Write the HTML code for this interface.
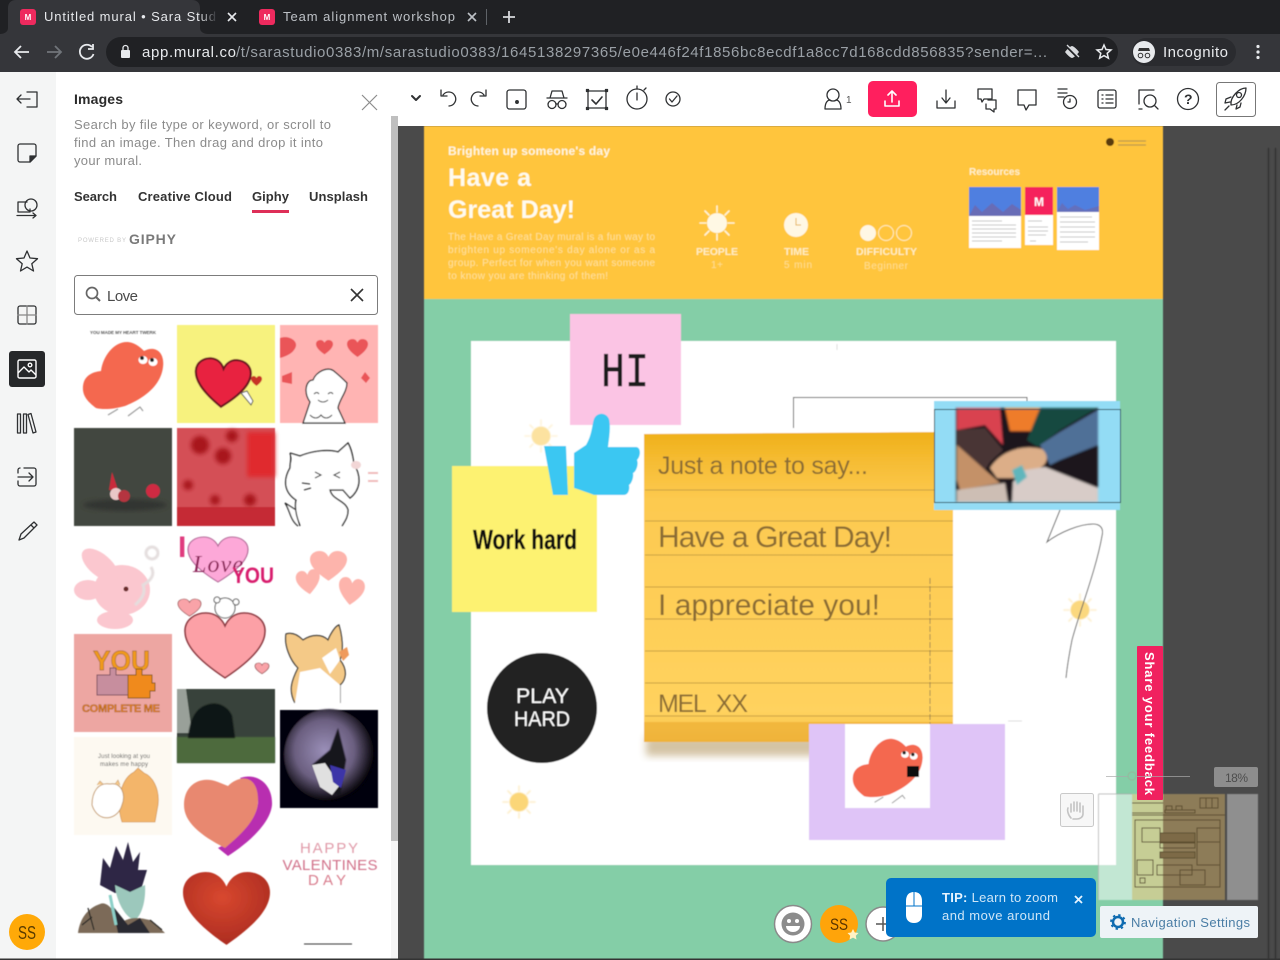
<!DOCTYPE html>
<html><head><meta charset="utf-8"><title>Untitled mural</title>
<style>
html,body{margin:0;padding:0;background:#4a4a4a;width:1280px;height:960px;overflow:hidden}
svg.root{display:block;position:absolute;left:0;top:0;filter:blur(.35px)}
text{font-family:"Liberation Sans","DejaVu Sans",sans-serif}
.b{font-weight:bold}
.ic{fill:none;stroke:#2f3133;stroke-width:1.3;stroke-linecap:round;stroke-linejoin:round}
.hand{font-family:"Liberation Sans",sans-serif;fill:#8a6c36}
.ln{stroke:#c9a043;stroke-width:1}
</style></head><body>
<svg class="root" width="1280" height="960" viewBox="0 0 1280 960" xmlns="http://www.w3.org/2000/svg">
<defs>
<path id="h" d="M50 90C12 62 0 42 0 25C0 9 13 0 26 0C38 0 46 8 50 18C54 8 62 0 74 0C87 0 100 9 100 25C100 42 88 62 50 90Z"/>
<filter id="bl" x="-5%" y="-5%" width="110%" height="110%"><feGaussianBlur stdDeviation="0.5"/></filter>
<filter id="bl2" x="-10%" y="-10%" width="120%" height="120%"><feGaussianBlur stdDeviation="1.1"/></filter>
<filter id="bl4" x="-20%" y="-20%" width="140%" height="140%"><feGaussianBlur stdDeviation="2.2"/></filter>
<filter id="bl3" x="-10%" y="-30%" width="120%" height="160%"><feGaussianBlur stdDeviation="4"/></filter>
<linearGradient id="ng" x1="0" y1="0" x2="0" y2="1">
<stop offset="0" stop-color="#efb019"/><stop offset=".1" stop-color="#f6bd35"/><stop offset=".22" stop-color="#fdca50"/><stop offset=".9" stop-color="#ffd25e"/><stop offset="1" stop-color="#f7c14a"/></linearGradient>
<linearGradient id="fade" x1="0" y1="0" x2="1" y2="0"><stop offset="0" stop-color="#e8eaed"/><stop offset=".9" stop-color="#e8eaed"/><stop offset="1" stop-color="#35363a"/></linearGradient>
<radialGradient id="rh" cx=".45" cy=".35" r=".7"><stop offset="0" stop-color="#d8482f"/><stop offset="1" stop-color="#a92a20"/></radialGradient>
<radialGradient id="dk" cx=".45" cy=".45" r=".55"><stop offset="0" stop-color="#9a8fb8"/><stop offset=".6" stop-color="#6b5f80"/><stop offset="1" stop-color="#050308"/></radialGradient>
<g id="sun"><g stroke="#fdeec8" stroke-width="1.600" stroke-linecap="round"><path d="M0-16V-11M0 11V16M-16 0H-11M11 0H16M-11-11L-8-8M8 8L11 11M11-11L8-8M-8 8L-11 11"/></g><circle r="9.500" fill="#fbd678"/></g>
<g id="bigheart">
<path d="M96 408C88 402 82 396 83 386C84 376 92 372 101 371C103 355 115 341 128 342C136 343 141 348 144 351C155 345 165 352 163 367C161 385 145 398 125 406C115 409 103 410 96 408Z" fill="#f4684f"/>
<ellipse cx="143" cy="360" rx="4.500" ry="4" fill="#fff"/><ellipse cx="153" cy="362" rx="4.500" ry="4" fill="#fff"/><circle cx="142" cy="358" r="2" fill="#222"/><circle cx="152" cy="360" r="2" fill="#222"/>
<path d="M108 415L118 409M128 416L140 407L143 411" stroke="#999" fill="none" stroke-width="1.100"/>
</g>
</defs>

<rect width="1280" height="960" fill="#4a4a4a"/>

<!-- canvas -->
<g filter="url(#bl)">
<rect x="424" y="126" width="739" height="173" fill="#ffc53c"/>
<rect x="424" y="299" width="739" height="661" fill="#84cea7"/>
<rect x="471" y="341" width="645" height="524" fill="#fff"/>
<path d="M837 344v6" stroke="#ddd"/>
<text x="448" y="155" font-size="12" class="b" fill="#fff" fill-opacity=".85" textLength="162">Brighten up someone's day</text>
<text x="448" y="186" font-size="25" class="b" fill="#fff" fill-opacity=".92" textLength="83">Have a</text>
<text x="448" y="218" font-size="25" class="b" fill="#fff" fill-opacity=".92" textLength="127">Great Day!</text>
<g font-size="10" fill="#fff" fill-opacity=".5">
<text x="448" y="240" textLength="207">The Have a Great Day mural is a fun way to</text>
<text x="448" y="253" textLength="207">brighten up someone's day alone or as a</text>
<text x="448" y="266" textLength="207">group. Perfect for when you want someone</text>
<text x="448" y="279" textLength="160">to know you are thinking of them!</text>
</g>
<path d="M717 206V212M717 234V240M700 223H706M728 223H734M705 211L709 215M725 231L729 235M729 211L725 215M709 231L705 235" stroke="#fff" stroke-opacity=".8" stroke-width="1.600" stroke-linecap="round"/>
<circle cx="717" cy="223" r="10" fill="#fff8e4"/>
<circle cx="796" cy="225" r="12" fill="#fff7e4"/><path d="M796 218v7h5" stroke="#e6b44a" fill="none"/>
<circle cx="868" cy="233" r="8" fill="#fff7e4"/><circle cx="886" cy="233" r="7.500" fill="none" stroke="#fff" stroke-opacity=".7"/><circle cx="904" cy="233" r="7.500" fill="none" stroke="#fff" stroke-opacity=".7"/>
<g font-size="10.500" class="b" fill="#fff" fill-opacity=".7">
<text x="696" y="255" textLength="42">PEOPLE</text><text x="784" y="255" textLength="25">TIME</text><text x="856" y="255" textLength="61">DIFFICULTY</text>
</g>
<g font-size="10" fill="#fff" fill-opacity=".45">
<text x="711" y="268" textLength="12">1+</text><text x="784" y="268" textLength="28">5 min</text><text x="864" y="269" textLength="44">Beginner</text>
</g>
<text x="969" y="175" font-size="10" class="b" fill="#fff" fill-opacity=".75" textLength="51">Resources</text>
<rect x="969" y="187" width="52" height="61" fill="#fff"/><rect x="969" y="187" width="52" height="29" fill="#4f7fe0"/><path d="M969 216L975 205 982 212 992 203 1003 212 1012 204 1021 210V216Z" fill="#7a5f9a" opacity=".6"/>
<path d="M972 221h30M972 225h44M972 229h44M972 233h44M972 237h44M972 241h30" stroke="#c6c6c6"/>
<rect x="1025" y="187" width="28" height="58" fill="#fff"/><rect x="1025" y="187" width="28" height="28" fill="#f5215c"/>
<text x="1039" y="206" font-size="12" class="b" fill="#fff" text-anchor="middle">M</text>
<path d="M1028 221h14M1028 227h20M1028 231h20M1028 235h18M1030 241h6" stroke="#c6c6c6"/>
<rect x="1057" y="187" width="42" height="63" fill="#fff"/><rect x="1057" y="187" width="42" height="25" fill="#4f7fe0"/><path d="M1057 212L1062 203 1068 209 1075 205 1085 210 1099 206V212Z" fill="#7a5f9a" opacity=".5"/>
<path d="M1060 217h32M1060 222h35M1060 227h35M1060 232h35M1060 237h35M1060 242h28" stroke="#c6c6c6"/>
<circle cx="1110" cy="142" r="4" fill="#5a3a10"/><path d="M1118 141h28M1118 145h28" stroke="#bb9a50" stroke-width="1.300"/>

<!-- HI -->
<rect x="570" y="314" width="111" height="111" fill="#fbc4e4"/>
<text x="601" y="386" font-size="48" fill="#1c1c1c" stroke="#1c1c1c" stroke-width=".5" textLength="48" lengthAdjust="spacingAndGlyphs" style="font-family:'Liberation Mono',monospace">HI</text>

<!-- suns -->
<use href="#sun" transform="translate(541 436)" opacity=".7" filter="url(#bl)"/>
<use href="#sun" transform="translate(1080 610)" opacity=".95" filter="url(#bl)"/>
<use href="#sun" transform="translate(519 802)" filter="url(#bl)"/>

<!-- yellow note -->
<rect x="452" y="466" width="145" height="146" fill="#fdf271"/>
<text x="473" y="549" font-size="28" class="b" fill="#111" stroke="#111" stroke-width=".3" textLength="104" lengthAdjust="spacingAndGlyphs">Work hard</text>

<!-- thumb -->
<path d="M544 446H566L568 495H553Z" fill="#3ac7f2"/>
<path d="M574 453L586 445C592 435 592 425 594 419C597 412 606 412 609 419C611 428 609 438 608 447L636 447C641 447 641 456 637 460C639 464 636 472 633 473C634 478 631 484 629 485C630 490 628 495 624 495L594 495C586 492 580 490 574 488Z" fill="#3ac7f2"/>

<!-- connector -->
<path d="M793.500 428V397.500H1027V402" fill="none" stroke="#555"/>

<!-- orange note -->
<rect x="646" y="736" width="306" height="20" fill="#a8884a" opacity=".5" filter="url(#bl3)"/>
<path d="M644 434L953 432L953 722L953 742H644Z" fill="url(#ng)"/>
<rect x="644" y="722" width="309" height="20" fill="#e9a72c" opacity=".55"/>
<g class="ln"><path d="M645 490H953M645 521H953M645 555H953M645 587H953M645 619H953M645 651H953M645 683H953M645 716H953"/></g>
<text x="658" y="474" font-size="25" class="hand" textLength="210">Just a note to say...</text>
<text x="658" y="547" font-size="30" class="hand" textLength="234">Have a Great Day!</text>
<text x="658" y="615" font-size="30" class="hand" textLength="222">I appreciate you!</text>
<text x="658" y="712" font-size="25" class="hand" textLength="90" xml:space="preserve">MEL  XX</text>
<path d="M930 578V830" stroke="#8f7a50" stroke-width=".8" stroke-dasharray="6 2"/>

<!-- photo -->
<rect x="934" y="401" width="186" height="109" fill="#93dcf5"/>
<g filter="url(#bl2)">
<rect x="956" y="408" width="142" height="94" fill="#1a181b"/>
<path d="M957 408H1000L1003 445L985 425L957 430Z" fill="#d9434f"/>
<path d="M1005 408H1040V425L1034 431H1010Z" fill="#ee7b2a"/>
<path d="M1040 408H1097L1060 430L1038 447L1027 440Z" fill="#164a3f"/>
<path d="M1040 445L1060 432L1098 410V445L1060 460L1050 465Z" fill="#4f7097"/>
<path d="M957 430L985 428L1003 450L990 462L985 470L957 448Z" fill="#4a3635"/>
<path d="M957 445L985 470L1000 483L960 490L957 480Z" fill="#c49168"/>
<path d="M990 468C1000 452 1020 444 1042 449C1050 456 1048 466 1035 470L1015 478L997 478Z" fill="#dcae88"/>
<path d="M1013 482L1025 470L1045 467L1098 488V502H1012Z" fill="#d8ccc8"/>
<path d="M957 490L1005 483L1008 502H957Z" fill="#cdbeb4"/>
<path d="M1012 470l10-5 5 12-10 8z" fill="#5eb6bc"/>
</g>
<rect x="934.500" y="409.500" width="186" height="93" fill="none" stroke="#2b4d5a"/>

<!-- squiggle -->
<path d="M1060 510L1047 542C1060 532 1080 524 1093 524C1100 524 1104 528 1102 536C1096 570 1080 610 1072 640C1069 655 1067 668 1066 678" fill="none" stroke="#666" stroke-width="1"/>

<!-- black circle -->
<circle cx="542" cy="708" r="55" fill="#222"/>
<text x="516" y="703" font-size="21" fill="#fff" textLength="53" lengthAdjust="spacingAndGlyphs">PLAY</text>
<text x="514" y="726" font-size="21" fill="#fff" textLength="56" lengthAdjust="spacingAndGlyphs">HARD</text>

<!-- purple note -->
<rect x="809" y="724" width="196" height="116" fill="#dfc4f7"/>
<rect x="845" y="724" width="85" height="84" fill="#fff"/>
<g transform="translate(845 724) scale(.87) translate(-74 -325)"><use href="#bigheart"/></g>
<rect x="907" y="766" width="12" height="11" fill="#111"/>
<path d="M1008 721h14" stroke="#ddd"/>

<!-- right dark rails -->
<path d="M1268.500 148V960M1275.500 148V960" stroke="#303030" stroke-width="1.500"/>
</g>

<!-- minimap -->
<g filter="url(#bl)">
<rect x="1098" y="794" width="34" height="106" fill="#fff" fill-opacity=".5"/>
<path d="M1098.500 794V900M1098.500 794H1132" stroke="#aaa" fill="none" stroke-width=".7"/>
<rect x="1132" y="794" width="31" height="106" fill="#c6cd95"/>
<rect x="1163" y="794" width="62" height="106" fill="#8d7c58"/>
<rect x="1227" y="794" width="31" height="106" fill="#8f8f8f"/>
<g fill="none" stroke="#5c4d2e" stroke-width="1">
<path d="M1132 803h31M1132 813h31M1132 815h93"/>
<rect x="1135" y="820" width="85" height="67"/>
<rect x="1142" y="828" width="18" height="14"/>
<rect x="1160" y="833" width="35" height="9" fill="#7d6b47"/><rect x="1160" y="843" width="35" height="5"/><rect x="1160" y="852" width="35" height="6" fill="#7d6b47"/>
<rect x="1197" y="828" width="23" height="14"/><rect x="1197" y="842" width="23" height="23"/>
<rect x="1180" y="870" width="25" height="15"/><rect x="1157" y="865" width="35" height="10"/>
<rect x="1137" y="860" width="16" height="15"/><rect x="1140" y="878" width="5" height="5"/>
<path d="M1165 810h30v3h-30zM1166 806h6v4h-6zM1176 806h6v4h-6zM1200 798h18v10h-18zM1206 798v10M1212 798v10"/>
</g>
</g>

<!-- toolbar -->
<rect x="398" y="72" width="882" height="54" fill="#fff"/>

<g class="ic">
<path d="M412 96l4 4 4-4" stroke-width="2"/>
<path d="M443 95A7 7 0 1 1 449 106M441 90V96H447"/>
<path d="M484 95A7 7 0 1 0 478 106M486 90V96H480"/>
<rect x="507" y="90" width="19" height="19" rx="2.500"/><circle cx="517" cy="102" r="1.300" fill="#2f3133"/>
<path d="M552 91h10l2 7h-14zM547 98h20"/><circle cx="552" cy="104.500" r="4"/><circle cx="562" cy="104.500" r="4"/><path d="M556 104h2"/>
<rect x="588" y="91" width="18" height="17"/><path d="M592 100l4 4 6-7" stroke-width="1.600"/><rect x="586.500" y="89.500" width="2" height="2" fill="#2f3133"/><rect x="605.500" y="89.500" width="2" height="2" fill="#2f3133"/><rect x="586.500" y="107.500" width="2" height="2" fill="#2f3133"/><rect x="605.500" y="107.500" width="2" height="2" fill="#2f3133"/>
<circle cx="637" cy="99" r="10"/><path d="M637 93v7M637 86v3M644 90l2-2"/>
<circle cx="673" cy="99" r="7"/><path d="M669.500 99l2.500 3 5-6"/>
<circle cx="833" cy="95" r="6"/><path d="M825 109c0-7 3-9 5-9M841 109c0-7-3-9-5-9M825 109h16"/>
<path d="M946 90v13M942 98l4 5 4-5M937 101v7h18v-7"/>
<path d="M978 89h14v10h-8l-2 3-1-3h-3zM988 100h8v9h-2v3l-4-3h-4v-5"/>
<path d="M1018 90h18v15h-7l-3 5-2-5h-6z"/>
<path d="M1058 89h9M1058 93h9M1058 97h6"/><circle cx="1070" cy="102" r="6.500"/><path d="M1070 99v3h-2"/>
<rect x="1098" y="90" width="18" height="18" rx="2"/><path d="M1102 95h1M1106 95h7M1102 99h1M1106 99h7M1102 103h1M1106 103h7"/>
<path d="M1139 104V90h15M1139 109h3"/><circle cx="1150" cy="101" r="6"/><path d="M1155 106l3 3"/>
<circle cx="1188" cy="99" r="10.500"/>
<rect x="1216.500" y="82.500" width="39" height="34" rx="3" stroke="#777" stroke-width="1"/>
<path d="M1231 105c-1-8 8-17 15-17c0 8-7 17-15 17zM1231 97l-5 2-1 4 5-1M1237 105l-1 4 4-2 1-4M1229 106l-4 4"/><circle cx="1239" cy="95" r="2.500"/>
</g>
<text x="1184" y="104" font-size="14" class="b" fill="#2f3133">?</text>
<text x="846" y="103" font-size="10" fill="#555">1</text>
<rect x="868" y="81" width="49" height="36" rx="5" fill="#ff1f5e"/>
<path d="M892 91v11M888 95l4-4 4 4M885 101v5h14v-5" fill="none" stroke="#fff" stroke-width="1.600" stroke-linecap="round" stroke-linejoin="round"/>

<!-- sidebar -->
<rect x="0" y="72" width="56" height="888" fill="#f4f5f5"/>
<rect x="9" y="351" width="36" height="36" rx="3" fill="#26282a"/>
<g class="ic">
<path d="M27 92h10v15H27M30 99H17M21 95l-4 4 4 4"/>
<path d="M20 144h14a2 2 0 0 1 2 2v10l-6 6H20a2 2 0 0 1-2-2V146a2 2 0 0 1 2-2z"/><path d="M36 156l-6 6v-6z" fill="#2f3133"/>
<path d="M27 202H18V212H30V209"/><circle cx="31" cy="205" r="6"/><path d="M17 215.500H36M33 213l3 2.500-3 2.500"/>
<path d="M27 251l3 7 7.500 .7-5.700 5 1.700 7.300-6.500-3.900-6.500 3.900 1.700-7.300-5.700-5 7.500-.7z"/>
<rect x="18" y="306" width="18" height="18" rx="2"/><path d="M27 306v18M18 315h18" stroke="#888"/>
<path d="M17.500 414v19h3v-19zM23.500 414v19h3v-19zM28 414.500l5 18.500 3-1-5-18.500z"/>
<path d="M24 468h10a2 2 0 0 1 2 2v14a2 2 0 0 1-2 2H20a2 2 0 0 1-2-2v-3M18 473v-3a2 2 0 0 1 2-2M18 477h15M29 473l4 4-4 4"/>
<path d="M19 540l2-6 13-12 3 3-13 13zM31 525l3 3M19 540l5-2"/>
</g>
<g fill="none" stroke="#fff" stroke-width="1.400" stroke-linejoin="round"><rect x="18" y="360" width="18" height="18" rx="1.500"/><path d="M18 373l6-6 5 5 2-2 5 5"/><circle cx="30" cy="365" r="1.800"/></g>
<circle cx="27" cy="932" r="18" fill="#ffa908"/>
<text x="18" y="939" font-size="18" fill="#5a3c00" textLength="18" lengthAdjust="spacingAndGlyphs">SS</text>

<!-- panel -->
<rect x="56" y="72" width="342" height="888" fill="#fff"/>
<rect x="391" y="116" width="7" height="844" fill="#f5f5f5"/><rect x="391" y="116" width="7" height="725" fill="#bfbfbf"/>
<text x="74" y="104" font-size="14" class="b" fill="#2b2b2b" textLength="49">Images</text>
<path d="M362 95l15 15M377 95l-15 15" stroke="#8c8c8c" stroke-width="1.200"/>
<g font-size="13" fill="#8b8b8b">
<text x="74" y="129" textLength="257">Search by file type or keyword, or scroll to</text>
<text x="74" y="147" textLength="249">find an image. Then drag and drop it into</text>
<text x="74" y="165" textLength="68">your mural.</text>
</g>
<g font-size="13" class="b" fill="#333">
<text x="74" y="201" textLength="43">Search</text>
<text x="138" y="201" textLength="94">Creative Cloud</text>
<text x="252" y="201" textLength="37">Giphy</text>
<text x="309" y="201" textLength="59">Unsplash</text>
</g>
<rect x="252" y="210" width="37" height="3" fill="#de2f58"/>
<text x="78" y="242" font-size="6" fill="#c8c8c8" textLength="48">POWERED BY</text>
<text x="129" y="244" font-size="14" class="b" fill="#7a7a7a" textLength="47">GIPHY</text>
<rect x="74.500" y="275.500" width="303" height="39" rx="3" fill="#fff" stroke="#7c7c7c"/>
<circle cx="92" cy="293" r="5.500" fill="none" stroke="#666" stroke-width="1.700"/><path d="M96 297l4 4" stroke="#666" stroke-width="2"/>
<text x="107" y="301" font-size="15" fill="#4a4a4a" textLength="31">Love</text>
<path d="M351 289l12 12M363 289l-12 12" stroke="#333" stroke-width="1.600"/>

<!-- tiles -->
<g filter="url(#bl)">
<text x="90" y="334" font-size="4.500" class="b" fill="#555" textLength="66">YOU MADE MY HEART TWERK</text>
<use href="#bigheart"/>

<rect x="177" y="325" width="98" height="98" fill="#f7f27e"/>
<g transform="translate(195 359) rotate(4 25 25) scale(.55 .53)"><use href="#h" fill="#e8233f" stroke="#6e1720" stroke-width="4"/></g>
<g transform="translate(251 376) scale(.11)"><use href="#h" fill="#c83028"/></g>
<path d="M241 393l10 12 2-4-6-10z" fill="#fff" stroke="#555"/>

<rect x="280" y="325" width="98" height="98" fill="#ffb4b3"/>
<g fill="#ea5458">
<path d="M280 338c8-3 17 2 16 8-2 7-9 10-16 12z"/>
<g transform="translate(316 340) scale(.17 .16)"><use href="#h"/></g>
<g transform="translate(347 339) scale(.21 .2)"><use href="#h"/></g>
<path d="M282 376l10-4v12l-10-2z"/>
<path d="M361 378l4-6 5 6-4 5z"/>
</g>
<path d="M303 423L310 402C303 392 306 380 313 380C316 372 328 365 335 372C340 376 344 380 347 383C347 392 339 400 338 408L345 423Z" fill="#fff" stroke="#222" stroke-width="1.300"/>
<path d="M314 394q3-3 5 0M328 394q3-3 5 0M318 400q5 4 10 0M310 415q6 6 11 0q5 6 11 0" stroke="#222" fill="none"/>

<rect x="74" y="428" width="98" height="98" fill="#43473f"/>
<ellipse cx="125" cy="505" rx="42" ry="6" fill="#333631" filter="url(#bl4)"/>
<path d="M112 472l6 18h-9z" fill="#c9293b"/><circle cx="116" cy="494" r="6" fill="#e9c8c8"/><circle cx="124" cy="496" r="6" fill="#b5343f"/><circle cx="153" cy="491" r="7" fill="#cf2b43"/>

<rect x="177" y="428" width="98" height="98" fill="#d45057"/>
<g filter="url(#bl4)" fill="#a8141c"><circle cx="200" cy="445" r="9"/><circle cx="223" cy="456" r="8"/><circle cx="232" cy="436" r="6"/><circle cx="188" cy="485" r="5"/><circle cx="215" cy="500" r="5"/><circle cx="250" cy="500" r="6"/></g>
<rect x="247" y="432" width="28" height="45" fill="#e02a2f" filter="url(#bl4)"/>
<rect x="177" y="507" width="98" height="19" fill="#c0232c" opacity=".8"/>

<path d="M290 453L300 456C312 451 328 449 338 452L348 443C352 450 353 458 354 464C362 478 360 490 350 498L343 490L330 490C332 500 345 500 348 510C348 518 344 522 342 526M290 453C292 458 290 462 290 468C283 480 284 492 296 500C294 510 298 520 300 526M296 510L285 503C290 510 290 520 298 526" fill="#fff" stroke="#222" stroke-width="1.300"/>
<path d="M315 472l6 3-6 3M340 472l-6 3 6 3M302 483l8 1M304 490l7-2" stroke="#222" fill="none"/>
<ellipse cx="356" cy="465" rx="5" ry="4" fill="#f2d6d6"/>
<rect x="368" y="472" width="10" height="2" fill="#f0bdbd"/><rect x="368" y="480" width="10" height="2" fill="#f0bdbd"/>

<g fill="#fbc7cf">
<ellipse cx="122" cy="590" rx="28" ry="25"/><ellipse cx="100" cy="565" rx="22" ry="11" transform="rotate(40 100 565)"/><ellipse cx="88" cy="590" rx="14" ry="10"/><ellipse cx="115" cy="620" rx="18" ry="9"/>
</g>
<circle cx="126" cy="589" r="2.500" fill="#6a2a2a"/>
<g fill="none" stroke="#e4dede" stroke-width="3" filter="url(#bl)"><path d="M135 605q12-10 8-20 14-8 8-18"/><circle cx="152" cy="553" r="6"/></g>

<g transform="translate(188 537) scale(.6 .5)"><use href="#h" fill="#fda8d8" stroke="#b26a98" stroke-width="2"/></g>
<text x="178" y="557" font-size="30" class="b" fill="#e03a7e">I</text>
<text x="193" y="572" font-size="24" style="font-style:italic;font-family:'Liberation Serif',serif" fill="#8c2458" textLength="50">Love</text>
<text x="232" y="583" font-size="22" class="b" fill="#d81f6d" textLength="42" lengthAdjust="spacingAndGlyphs">YOU</text>

<g fill="#fdb4ac">
<g transform="translate(310 551) scale(.37 .33)"><use href="#h"/></g>
<g transform="translate(295 572) scale(.24 .27) rotate(-8)"><use href="#h"/></g>
<g transform="translate(340 576) scale(.26 .3) rotate(8)"><use href="#h"/></g>
</g>

<g transform="translate(185 613) scale(.8 .72)"><use href="#h" fill="#fca0a6" stroke="#8c3840" stroke-width="2"/></g>
<g transform="translate(178 599) scale(.23 .19)"><use href="#h" fill="#f9a3a8" stroke="#844" stroke-width="3"/></g>
<g transform="translate(255 663) scale(.14 .12)"><use href="#h" fill="#f9a3a8" stroke="#844" stroke-width="5"/></g>
<circle cx="225" cy="608" r="10" fill="#fff" stroke="#555"/><circle cx="217" cy="600" r="3" fill="#fff" stroke="#555"/><circle cx="236" cy="602" r="3" fill="#fff" stroke="#555"/>

<path d="M295 703C288 690 292 680 298 668C290 660 284 645 286 634C292 632 298 635 303 640C312 634 322 634 328 640C330 635 335 626 339 625C342 635 344 650 340 660C348 670 346 680 340 685V703" fill="#f4c987" stroke="#333" stroke-width="1.200"/>
<path d="M300 672L320 668L340 685L340 703H295Z" fill="#fff"/>
<path d="M322 658l14-10 4 12-10 14z" fill="#fff"/><path d="M339 652l8-5 2 8-6 6z" fill="#ef9a5c"/>

<rect x="74" y="634" width="98" height="98" fill="#eda6a2"/>
<text x="93" y="670" font-size="28" class="b" fill="#f09a1e" stroke="#8a5a10" stroke-width=".5" textLength="57" lengthAdjust="spacingAndGlyphs">YOU</text>
<path d="M97 675h13v-7h6v7h12v20H97z" fill="#c78e9e" stroke="#7a5060"/>
<path d="M128 675h8v-6h6v6h10v8h3v8h-5v7h-22z" fill="#f08a1e" stroke="#8a5a10"/>
<text x="82" y="712" font-size="11" class="b" fill="#e8821c" stroke="#6a4510" stroke-width=".3" textLength="78">COMPLETE ME</text>

<rect x="177" y="689" width="98" height="74" fill="#38423a"/>
<rect x="177" y="737" width="98" height="26" fill="#4e6a3c" filter="url(#bl)"/>
<path d="M177 689h9l6 44h-15z" fill="#99a099"/>
<path d="M188 738c2-20 8-28 16-32 12-6 24 0 28 10l3 22z" fill="#111513" filter="url(#bl)"/>

<rect x="280" y="710" width="98" height="98" fill="#050308"/>
<ellipse cx="329" cy="755" rx="45" ry="46" fill="url(#dk)" filter="url(#bl)"/>
<path d="M330 750L338 728L346 760L340 795L325 790L312 765Z" fill="#15121a" filter="url(#bl)"/>
<path d="M312 765l13-2 15 22-8 10-12-8z" fill="#e0e0e0"/>
<path d="M330 765l16 5-5 18-8-6z" fill="#3e35a8"/>

<rect x="74" y="737" width="98" height="98" fill="#fdf9f1"/>
<text x="98" y="758" font-size="6" fill="#555" textLength="52">Just looking at you</text>
<text x="100" y="766" font-size="6" fill="#555" textLength="48">makes me happy</text>
<path d="M122 822C115 800 122 778 134 772L138 768L144 773C152 776 160 788 158 805L155 822Z" fill="#f3b56a" stroke="#c98a40" stroke-width=".6"/>
<path d="M92 805C92 792 98 782 110 784C122 782 126 795 122 805C118 820 98 824 92 805Z" fill="#fff" stroke="#c59a68"/>
<path d="M97 785l3-4 3 3M115 784l3-4 2 5" fill="#f6c98a" stroke="#c59a68" stroke-width=".6"/>

<path d="M240 778C258 772 273 785 272 805C270 825 245 845 228 856L218 848C238 838 258 820 258 800Z" fill="#b82fb0"/>
<path d="M184 805C184 785 200 775 218 782L228 786C240 774 258 775 258 800C258 820 240 835 225 848C200 835 184 822 184 805Z" fill="#e8886f"/>

<!-- warrior -->
<path d="M100 885L103 858L110 868L116 846L123 860L128 842L133 862L140 852L138 870L147 870L140 893L115 893Z" fill="#2d2744"/>
<path d="M115 885C116 900 125 918 135 920C142 915 146 900 145 885L130 892Z" fill="#9cc8bc"/>
<path d="M78 933C80 918 88 908 100 904C108 900 118 915 118 925C130 915 140 918 150 920C156 925 162 930 165 933Z" fill="#7b6b58"/>
<path d="M112 905L118 933H150L140 918L128 925Z" fill="#2c2a32"/>
<path d="M110 895l6 30" stroke="#8cd0c8" stroke-width="3" fill="none"/>
<path d="M82 925l10-8M88 908l6 22M150 920l12 10" stroke="#222" stroke-width="1.200" fill="none"/>

<g transform="translate(183 872) scale(.87 .81)"><use href="#h" fill="url(#rh)"/></g>

<g text-anchor="middle">
<text x="329" y="853" font-size="15" fill="#e09aa8" textLength="58">HAPPY</text>
<text x="330" y="870" font-size="15" fill="#d06f88" textLength="95">VALENTINES</text>
<text x="327" y="885" font-size="15" fill="#d87c8c" textLength="38">DAY</text>
</g>
<path d="M304 944h48" stroke="#333" stroke-width="1"/>
</g>

<!-- feedback tab -->
<rect x="1137" y="646" width="26" height="154" rx="1" fill="#f0215f"/>
<text transform="translate(1145 652) rotate(90)" font-size="13" class="b" fill="#fff" textLength="143">Share your feedback</text>

<!-- zoom controls -->
<path d="M1106 776.500H1128M1137 776.500H1190" stroke="#aaa" stroke-opacity=".7"/>
<circle cx="1132" cy="776" r="4" fill="none" stroke="#8fbf9f" stroke-width="1.500"/>
<rect x="1214" y="767" width="44" height="20" rx="2" fill="#8d8d8d"/>
<text x="1225" y="782" font-size="12" fill="#4d4d4d" textLength="23">18%</text>
<rect x="1060.500" y="793.500" width="33" height="33" rx="2" fill="#f7f7f7" stroke="#c9c9c9"/>
<path d="M1071 818c-3-3-4-8-3-10M1071 804v8M1074 802v9M1077 802v9M1080 803v9M1083 806v8c0 3-3 5-6 5h-4" fill="none" stroke="#c4c4c4" stroke-width="1.600" stroke-linecap="round"/>

<!-- avatars -->
<circle cx="793" cy="924" r="18.500" fill="#fff" stroke="#8a8a8a" stroke-width="1.500"/>
<circle cx="793" cy="924" r="11.500" fill="#8c8c8c"/><circle cx="789" cy="921" r="2" fill="#fff"/><circle cx="797" cy="921" r="2" fill="#fff"/><path d="M786 926h14a7 6 0 0 1-14 0z" fill="#fff"/>
<circle cx="839" cy="924" r="19" fill="#ffa40a"/>
<text x="830" y="930" font-size="17" fill="#5a3400" textLength="18" lengthAdjust="spacingAndGlyphs">SS</text>
<path d="M853 929l1.800 3.500 3.700.5-2.700 2.700.7 3.800-3.500-1.900-3.500 1.900.7-3.800-2.700-2.700 3.700-.5z" fill="#fff2c4"/>
<circle cx="883" cy="924" r="17" fill="#fff" stroke="#8a8a8a" stroke-width="1.500"/>
<path d="M876 924h14M883 917v14" stroke="#555" stroke-width="1.500"/>

<!-- tip -->
<rect x="886" y="878" width="210" height="59" rx="5" fill="#0073c8"/>
<path d="M914 892c5 0 8 3 8 9v14c0 5-3 8-8 8s-8-3-8-8v-14c0-6 3-9 8-9z" fill="#fff"/>
<path d="M906 906h16M914 892v14" stroke="#0073c8" fill="none" stroke-width="1"/>
<text x="942" y="902" font-size="13" fill="#cfe6f7" textLength="116"><tspan class="b" fill="#e6f4ff">TIP:</tspan> Learn to zoom</text>
<text x="942" y="920" font-size="13" fill="#cfe6f7" textLength="108">and move around</text>
<path d="M1075 896l7 7M1082 896l-7 7" stroke="#e6f4ff" stroke-width="1.800"/>

<!-- nav settings -->
<rect x="1100" y="906" width="158" height="32" rx="2" fill="#eef3f7"/>
<circle cx="1118" cy="922" r="5" fill="none" stroke="#0f6bb0" stroke-width="2.500"/><circle cx="1118" cy="922" r="7" fill="none" stroke="#0f6bb0" stroke-width="1.800" stroke-dasharray="2.400 3.100"/>
<text x="1131" y="927" font-size="13" fill="#4a7da5" textLength="119">Navigation Settings</text>

<rect x="0" y="958.500" width="1280" height="1.500" fill="#333"/>

<!-- browser chrome -->
<rect x="0" y="0" width="1280" height="34" fill="#202124"/>
<rect x="0" y="34" width="1280" height="38" fill="#35363a"/>
<path d="M0 34c4 0 8-2 8-6V8c0-5 3-8 8-8h176c5 0 8 3 8 8v20c0 4 4 6 8 6z" fill="#35363a"/>
<rect x="106" y="37" width="1012" height="30" rx="15" fill="#202124"/>
<rect x="20" y="9" width="16" height="16" rx="3" fill="#ee2a5e"/><text x="28" y="20" font-size="8" class="b" fill="#fff" text-anchor="middle">M</text>
<rect x="259" y="9" width="16" height="16" rx="3" fill="#ee2a5e"/><text x="267" y="20" font-size="8" class="b" fill="#fff" text-anchor="middle">M</text>
<text x="44" y="21" font-size="13" fill="url(#fade)" textLength="172">Untitled mural • Sara Stud</text>
<text x="283" y="21" font-size="13" fill="#bdc1c6" textLength="172">Team alignment workshop</text>
<path d="M228 13l8 8M236 13l-8 8" stroke="#e8eaed" stroke-width="1.600"/>
<path d="M468 13l8 8M476 13l-8 8" stroke="#bdc1c6" stroke-width="1.600"/>
<path d="M486.500 9v16" stroke="#5f6368"/>
<path d="M503 17h12M509 11v12" stroke="#d7d9dc" stroke-width="1.800"/>
<path d="M29 52H15M21 46l-6 6 6 6" fill="none" stroke="#e8eaed" stroke-width="1.800"/>
<path d="M47 52h14M55 46l6 6-6 6" fill="none" stroke="#71757a" stroke-width="1.800"/>
<path d="M92 47a7 7 0 1 0 1.500 7M93 44v5h-5" fill="none" stroke="#e8eaed" stroke-width="1.800"/>
<rect x="121" y="50" width="9" height="8" rx="1" fill="#e8eaed"/><path d="M123 50v-2a2.300 2.300 0 0 1 5 0v2" fill="none" stroke="#e8eaed" stroke-width="1.300"/>
<text x="142" y="57" font-size="15" fill="#e8eaed" textLength="94">app.mural.co</text>
<text x="236" y="57" font-size="15" fill="#9aa0a6" textLength="811">/t/sarastudio0383/m/sarastudio0383/1645138297365/e0e446f24f1856bc8ecdf1a8cc7d168cdd856835?sender=...</text>
<path d="M1065 52c3-4 6-6 7-6s4 2 7 6c-3 4-6 6-7 6s-4-2-7-6z" fill="#d8dadd"/><path d="M1066 46l12 12" stroke="#202124" stroke-width="2"/><path d="M1067 45l12 12" stroke="#d8dadd" stroke-width="1.300"/>
<path d="M1104 45l2 4.500 5 .5-3.800 3.300 1.200 4.900-4.400-2.600-4.400 2.600 1.200-4.900-3.800-3.300 5-.5z" fill="none" stroke="#e8eaed" stroke-width="1.500"/>
<rect x="1132" y="38" width="104" height="28" rx="14" fill="#2a2b2f"/>
<circle cx="1144" cy="52" r="11" fill="#e8eaed"/><path d="M1139 48h10l1 3h-12z" fill="#333"/><circle cx="1140.500" cy="55.500" r="2.300" fill="none" stroke="#333"/><circle cx="1147.500" cy="55.500" r="2.300" fill="none" stroke="#333"/>
<text x="1163" y="57" font-size="15" fill="#e8eaed" textLength="65">Incognito</text>
<circle cx="1258" cy="46.500" r="1.600" fill="#e8eaed"/><circle cx="1258" cy="52" r="1.600" fill="#e8eaed"/><circle cx="1258" cy="57.500" r="1.600" fill="#e8eaed"/>
</svg>
</body></html>
